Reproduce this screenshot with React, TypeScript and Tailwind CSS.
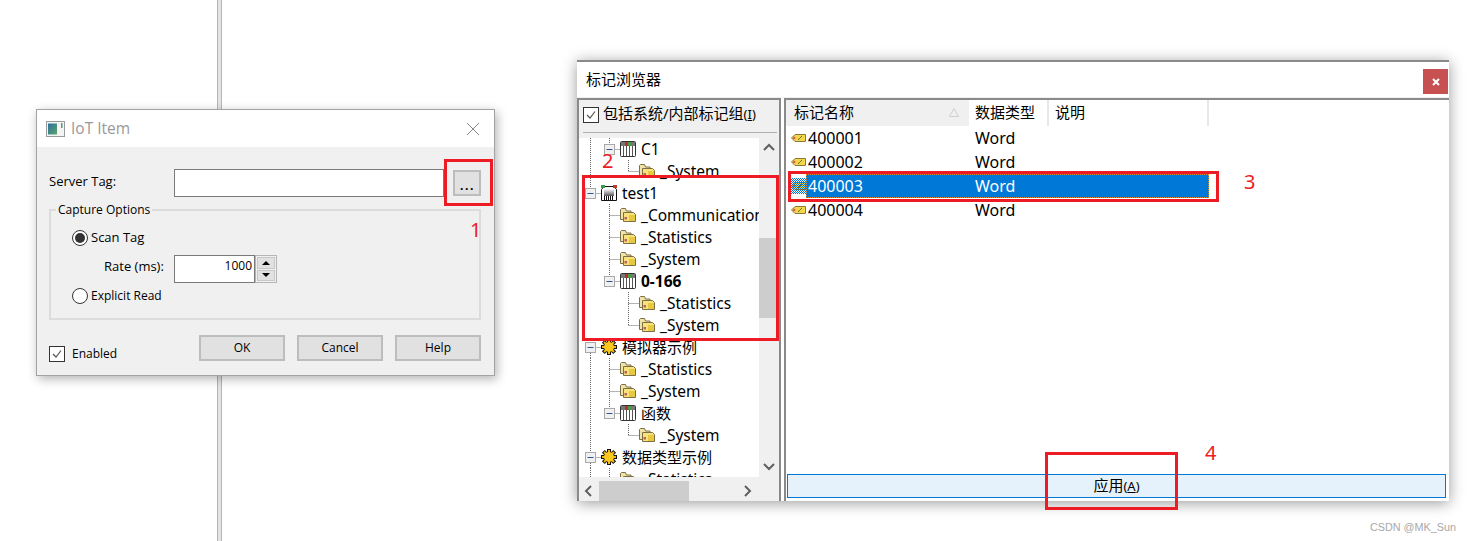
import React from "react";

const cjk = "font-['Noto_Sans','Noto_Sans_CJK_SC',sans-serif]";
const line = "#666";

function Folder() {
  return (
    <svg width="16" height="16" viewBox="0 0 16 16" className="shrink-0">
      <path d="M0.5 2.5V12.5H4V6.5H11V4H6.5L5.5 1.5H1.5Z" fill="#efe3a8" stroke="#7d6f45" />
      <path d="M3.5 5.5H13.5L15.5 7.5V14.5H3.5Z" fill="#f7e27c" stroke="#7d6f45" />
      <rect x="9" y="8" width="6" height="6" fill="#e6c93f" />
      <rect x="4.5" y="10" width="2.5" height="2.5" fill="#c0605d" />
    </svg>
  );
}

function Plc() {
  return (
    <svg width="16" height="16" viewBox="0 0 16 16" className="shrink-0">
      <rect x="0.5" y="0.5" width="15" height="15" rx="1" fill="#fff" stroke="#333" />
      <rect x="1" y="1" width="14" height="4" fill="#777" />
      <rect x="5" y="1" width="3" height="4" fill="#b8322a" />
      <rect x="8" y="1" width="3" height="4" fill="#4a9a4a" />
      <path d="M3.5 5V15M6.5 5V15M9.5 5V15M12.5 5V15" stroke="#555" />
    </svg>
  );
}

function Device() {
  return (
    <svg width="16" height="16" viewBox="0 0 16 16" className="shrink-0">
      <defs>
        <linearGradient id="rj" x1="0" x2="0" y1="0" y2="1">
          <stop offset="0" stopColor="#fff" />
          <stop offset="1" stopColor="#555" />
        </linearGradient>
      </defs>
      <path d="M0.5 15.5V4.5L3 1.5H13L15.5 4.5V15.5Z" fill="#fff" stroke="#111" />
      <rect x="3" y="4" width="10" height="7" fill="url(#rj)" />
      <rect x="0" y="0" width="4" height="3" fill="#2f9e44" />
      <rect x="12" y="0" width="4" height="3" fill="#c0392b" />
      <path d="M3.5 11V15M5.5 11V15M7.5 11V15M9.5 11V15M11.5 11V15" stroke="#111" />
    </svg>
  );
}

function Gear() {
  return (
    <svg width="16" height="16" viewBox="0 0 16 16" className="shrink-0">
      {[0, 45, 90, 135].map((a) => (
        <rect key={a} x="6.5" y="0.5" width="3" height="15" fill="#f6b40e" stroke="#111" transform={`rotate(${a} 8 8)`} />
      ))}
      <circle cx="8" cy="8" r="5" fill="#fbc81e" />
    </svg>
  );
}

function Tag({ selected }: { selected?: boolean }) {
  return (
    <svg width="15" height={selected ? 16 : 11} viewBox={selected ? "0 -3 15 16" : "0 0 15 11"} className="shrink-0">
      <defs>
        <pattern id="sel" width="2" height="2" patternUnits="userSpaceOnUse">
          <rect width="1" height="1" fill="#0078d7" />
          <rect x="1" y="1" width="1" height="1" fill="#0078d7" />
        </pattern>
      </defs>
      <path d="M0.5 5L4 1.5H14.5V8.5H4Z" fill="#f2d64b" stroke="#8a7a3a" />
      <circle cx="3.2" cy="5" r="1.2" fill="#d9534f" />
      <path d="M7 7L11 3" stroke="#7a6a2a" />
      {selected && <rect x="0" y="-3" width="15" height="16" fill="url(#sel)" />}
    </svg>
  );
}

type Row = {
  depth: number;
  icon: "folder" | "plc" | "device" | "gear";
  text: string;
  bold?: boolean;
  expander?: boolean;
  root?: boolean;
  lvl1?: boolean;
  last?: boolean;
  rootUp?: boolean;
  rootDown?: boolean;
  cn?: boolean;
};

const rows: Row[] = [
  { depth: 1, icon: "plc", text: "C1", expander: true, root: true },
  { depth: 2, icon: "folder", text: "_System", last: true, root: true },
  { depth: 0, icon: "device", text: "test1", expander: true, rootUp: true },
  { depth: 1, icon: "folder", text: "_Communications", lvl1: true },
  { depth: 1, icon: "folder", text: "_Statistics", lvl1: true },
  { depth: 1, icon: "folder", text: "_System", lvl1: true },
  { depth: 1, icon: "plc", text: "0-166", bold: true, expander: true },
  { depth: 2, icon: "folder", text: "_Statistics" },
  { depth: 2, icon: "folder", text: "_System", last: true },
  { depth: 0, icon: "gear", text: "模拟器示例", expander: true, rootDown: true, cn: true },
  { depth: 1, icon: "folder", text: "_Statistics", lvl1: true, root: true },
  { depth: 1, icon: "folder", text: "_System", lvl1: true, root: true },
  { depth: 1, icon: "plc", text: "函数", expander: true, root: true, cn: true },
  { depth: 2, icon: "folder", text: "_System", last: true, root: true },
  { depth: 0, icon: "gear", text: "数据类型示例", expander: true, rootUp: true, rootDown: true, cn: true },
  { depth: 1, icon: "folder", text: "_Statistics", lvl1: true, root: true },
];

function Guides({ r }: { r: Row }) {
  const w = r.depth === 0 ? 22 : r.depth === 1 ? 41 : 60;
  const x = r.depth === 0 ? 11.5 : r.depth === 1 ? 30.5 : 49.5;
  const d = "1 1";
  return (
    <svg width={w} height="22" className="shrink-0">
      {r.root && <path d="M11.5 0V22" stroke={line} strokeDasharray={d} fill="none" />}
      {r.rootUp && <path d="M11.5 0V6" stroke={line} strokeDasharray={d} fill="none" />}
      {r.rootDown && <path d="M11.5 17V22" stroke={line} strokeDasharray={d} fill="none" />}
      {r.lvl1 && <path d="M30.5 0V22" stroke={line} strokeDasharray={d} fill="none" />}
      {!r.expander && (
        <>
          {r.depth === 2 && <path d={`M${x} 0V${r.last ? 11 : 22}`} stroke={line} strokeDasharray={d} fill="none" />}
          <path d={`M${x} 11.5H${w}`} stroke={line} strokeDasharray={d} fill="none" />
        </>
      )}
      {r.expander && (
        <>
          {r.depth === 1 && <path d={`M${x} 0V6`} stroke={line} strokeDasharray={d} fill="none" />}
          <path d={`M${x + 5} 11.5H${w}`} stroke={line} strokeDasharray={d} fill="none" />
          <rect x={x - 5} y="6.5" width="10" height="10" fill="#f0f0f0" stroke="#a8a8a8" />
          <path d={`M${x - 3} 11.5H${x + 3}`} stroke="#2b5797" />
        </>
      )}
    </svg>
  );
}

const icons = { folder: Folder, plc: Plc, device: Device, gear: Gear };

function TreeRow({ r }: { r: Row }) {
  const Icon = icons[r.icon];
  const text = (r.cn ? "text-[15px]" : "pt-[2px] text-[15.5px]") + (r.bold ? " font-bold" : "");
  return (
    <div className="flex h-[22px] items-center whitespace-nowrap text-black">
      <Guides r={r} />
      <Icon />
      <span className={"ml-[5px] " + text}>{r.text}</span>
    </div>
  );
}

const tags = ["400001", "400002", "400003", "400004"];

function Red({ className }: { className: string }) {
  return <div className={"pointer-events-none absolute border-[3px] border-[#ed1c24] " + className} />;
}

function Num({ n, className }: { n: string; className: string }) {
  return <span className={"absolute text-[20px] leading-none text-[#ed1c24] " + className}>{n}</span>;
}

function IotDialog() {
  const btn = "flex h-[26px] w-[86px] items-center justify-center border-2 border-[#bdbdbd] bg-[#e1e1e1] pb-[1px] text-[12px] text-black";
  return (
    <div className="absolute left-[36px] top-[109px] flex h-[267px] w-[459px] flex-col border border-[#a3a3a3] bg-[#f0f0f0] font-['Open_Sans',sans-serif] text-[12px] text-black shadow-[2px_3px_10px_rgba(0,0,0,0.3)]">
      <div className="flex h-[37px] items-center bg-white pl-[9px] pr-[14px]">
        <svg width="19" height="16" viewBox="0 0 19 16" className="mr-[6px]">
          <defs>
            <linearGradient id="win" x1="0" x2="1" y1="0" y2="1">
              <stop offset="0" stopColor="#2f6f9f" />
              <stop offset="1" stopColor="#5aa56a" />
            </linearGradient>
          </defs>
          <rect x="0.5" y="0.5" width="18" height="15" fill="#f4f4f4" stroke="#9a9a9a" />
          <rect x="2" y="2.5" width="9" height="11" fill="url(#win)" />
          <rect x="15" y="2" width="1.5" height="5" fill="#5a9a7a" />
        </svg>
        <span className="text-[15.5px] text-[#999]">IoT Item</span>
        <svg width="14" height="14" viewBox="0 0 14 14" className="ml-auto">
          <path d="M1 1L13 13M13 1L1 13" stroke="#888" strokeWidth="1" />
        </svg>
      </div>
      <div className="flex flex-col pl-[12px] pr-[13px]">
        <div className="mt-[22px] flex h-[28px] items-center">
          <span className="w-[125px] pb-[2px] text-[13px]">Server Tag:</span>
          <div className="h-[28px] w-[270px] border border-[#7a7a7a] bg-white" />
          <div className="ml-[9px] flex h-[26px] w-[28px] items-center justify-center border-2 border-[#bdbdbd] bg-[#e1e1e1] pl-[1px] pt-[6px] font-bold leading-none tracking-[1.5px]">
            ...
          </div>
        </div>
        <div className="relative mt-[12px] h-[111px] border-2 border-[#dcdcdc]">
          <span className="absolute left-[5px] top-[-9px] bg-[#f0f0f0] px-[2px] leading-[16px]">Capture Options</span>
          <div className="ml-[21px] mt-[17px] flex h-[20px] items-center gap-[3px]">
            <div className="flex h-[16px] w-[16px] items-center justify-center rounded-full border border-[#333] bg-white">
              <div className="h-[10px] w-[10px] rounded-full bg-[#333]" />
            </div>
            <span className="text-[13px]">Scan Tag</span>
          </div>
          <div className="mt-[7px] flex h-[28px] items-center">
            <span className="ml-[53px] w-[70px] pb-[5px] text-[13px]">Rate (ms):</span>
            <div className="flex h-[28px] w-[81px] items-center justify-end border border-[#7a7a7a] bg-white pb-[6px] pr-[2px]">1000</div>
            <div className="flex h-[28px] w-[22px] flex-col gap-[1px] border border-[#b5b5b5] bg-[#f0f0f0] p-[1px]">
              <div className="flex flex-1 items-center justify-center border border-[#c8c8c8] bg-[#e1e1e1]">
                <div className="h-0 w-0 border-x-[4px] border-b-[4px] border-x-transparent border-b-black" />
              </div>
              <div className="flex flex-1 items-center justify-center border border-[#c8c8c8] bg-[#e1e1e1]">
                <div className="h-0 w-0 border-x-[4px] border-t-[4px] border-x-transparent border-t-black" />
              </div>
            </div>
          </div>
          <div className="ml-[21px] mt-[3px] flex h-[20px] items-center gap-[3px]">
            <div className="h-[16px] w-[16px] rounded-full border border-[#333] bg-white" />
            <span>Explicit Read</span>
          </div>
        </div>
        <div className="mt-[13px] flex items-center">
          <div className="mt-[12px] flex items-center gap-[7px]">
            <div className="flex h-[16px] w-[16px] items-center justify-center border border-[#333] bg-white">
              <svg width="12" height="12" viewBox="0 0 12 12">
                <path d="M2 6L5 9L10 2.5" stroke="#555" strokeWidth="1.2" fill="none" />
              </svg>
            </div>
            <span>Enabled</span>
          </div>
          <div className="ml-auto flex gap-[12px]">
            <div className={btn}>OK</div>
            <div className={btn}>Cancel</div>
            <div className={btn}>Help</div>
          </div>
        </div>
      </div>
    </div>
  );
}

function Chevron({ d }: { d: string }) {
  return (
    <svg width="12" height="12" viewBox="0 0 12 12" className="shrink-0">
      <path d={d} stroke="#606060" strokeWidth="2" fill="none" />
    </svg>
  );
}

function TagBrowser() {
  return (
    <div className={"absolute left-[577px] top-[60px] flex h-[441px] w-[872px] flex-col border-t-2 border-[#8a8a8a] bg-white text-[15px] text-black shadow-[0_2px_14px_rgba(0,0,0,0.4)] " + cjk}>
      <div className="flex h-[35px] shrink-0 items-center justify-between pl-[9px] pr-[1px] pt-[2px]">
        <span className="pb-[2px] text-[15px]">标记浏览器</span>
        <div className="mt-[2px] flex h-[25px] w-[25px] items-center justify-center bg-[#c75050]">
          <svg width="8" height="8" viewBox="0 0 8 8">
            <path d="M1 1L7 7M7 1L1 7" stroke="#fff" strokeWidth="2" />
          </svg>
        </div>
      </div>
      <div className="flex min-h-0 flex-1 border-t border-[#f0f0f0]">
        <div className="flex w-[204px] shrink-0 flex-col border-x-2 border-t-2 border-[#8a8a8a] bg-[#f0f0f0]">
          <div className="flex h-[32px] shrink-0 items-center gap-[4px] pb-[2px] pl-[4px] text-[15px]">
            <div className="flex h-[16px] w-[16px] items-center justify-center border border-[#333] bg-white">
              <svg width="12" height="12" viewBox="0 0 12 12">
                <path d="M2 6L5 9L10 2.5" stroke="#555" strokeWidth="1.2" fill="none" />
              </svg>
            </div>
            <span className="whitespace-nowrap pb-[3px]">
              包括系统/内部标记组<span className="text-[13px]">(<span className="underline">I</span>)</span>
            </span>
          </div>
          <div className="ml-[4px] mr-[2px] h-[1px] shrink-0 bg-[#b0b0b0]" />
          <div className="flex min-h-0 flex-1 pt-[5px]">
            <div className="h-[339px] w-[180px] overflow-hidden bg-white">
              {rows.map((r, i) => (
                <TreeRow key={i} r={r} />
              ))}
            </div>
            <div className="flex h-[339px] w-[20px] flex-col items-center">
              <div className="flex h-[20px] shrink-0 items-center justify-center">
                <Chevron d="M1 8L6 3L11 8" />
              </div>
              <div className="mt-[80px] h-[80px] w-full bg-[#cdcdcd]" />
              <div className="mt-auto flex h-[20px] shrink-0 items-center justify-center pb-[2px]">
                <Chevron d="M1 4L6 9L11 4" />
              </div>
            </div>
          </div>
          <div className="flex h-[20px] shrink-0 items-center">
            <div className="flex w-[20px] items-center justify-center">
              <Chevron d="M8 1L3 6L8 11" />
            </div>
            <div className="h-full w-[90px] bg-[#cdcdcd]" />
            <div className="ml-[48px] flex w-[20px] items-center justify-center">
              <Chevron d="M4 1L9 6L4 11" />
            </div>
          </div>
        </div>
        <div className="ml-[3px] flex flex-1 flex-col border-l-2 border-t-2 border-[#8a8a8a]">
          <div className="flex h-[26px] shrink-0 items-center text-[15px]">
            <div className="flex h-full w-[183px] items-center justify-between bg-[#f0f0f0] pb-[1px] pl-[8px] pr-[10px]">
              <span>标记名称</span>
              <svg width="10" height="9" viewBox="0 0 10 9">
                <path d="M5 0.5L9.5 8.5H0.5Z" fill="none" stroke="#cfcfcf" />
              </svg>
            </div>
            <div className="flex h-full w-[80px] items-center border-r-2 border-[#e8e8e8] pb-[1px] pl-[6px]">数据类型</div>
            <div className="flex h-full w-[160px] items-center border-r-2 border-[#e8e8e8] pb-[1px] pl-[6px]">说明</div>
          </div>
          <div className="flex flex-1 flex-col text-[16px]">
            {tags.map((t, i) => (
              <div key={t} className="flex h-[24px] items-center pl-[5px]">
                <Tag selected={i === 2} />
                <div className={"flex h-full w-[403px] items-center border pl-[1px] " + (i === 2 ? "border-dotted border-[#e08a2c] bg-[#0078d7] text-white" : "border-transparent")}>
                  <span className="w-[167px]">{t}</span>
                  <span>Word</span>
                </div>
              </div>
            ))}
          </div>
          <div className="ml-[1px] mr-[3px] mb-[3px] flex h-[24px] shrink-0 items-center justify-center border border-[#0078d7] bg-[#e5f1fb] pb-[1px] text-[15px]">
            <span>
              应用<span className="text-[13px]">(<span className="underline">A</span>)</span>
            </span>
          </div>
        </div>
      </div>
    </div>
  );
}

export default function App() {
  return (
    <div className={"relative h-[541px] w-[1471px] overflow-hidden bg-white " + cjk}>
      <div className="absolute left-[217px] top-0 h-full w-[5px] border-x border-[#b5b5b5] bg-[#e4e4e4]" />
      <IotDialog />
      <TagBrowser />
      <Red className="left-[444px] top-[159px] h-[47px] w-[49px]" />
      <Red className="left-[582px] top-[175px] h-[166px] w-[197px]" />
      <Red className="left-[788px] top-[171px] h-[31px] w-[431px]" />
      <Red className="left-[1045px] top-[452px] h-[58px] w-[133px]" />
      <Num n="1" className="left-[470px] top-[220px]" />
      <Num n="2" className="left-[602px] top-[151px]" />
      <Num n="3" className="left-[1244px] top-[172px]" />
      <Num n="4" className="left-[1205px] top-[443px]" />
      <span className="absolute left-[1370px] top-[519px] font-['Liberation_Sans',sans-serif] text-[10.8px] text-[#a8a8a8]">CSDN @MK_Sun</span>
    </div>
  );
}
